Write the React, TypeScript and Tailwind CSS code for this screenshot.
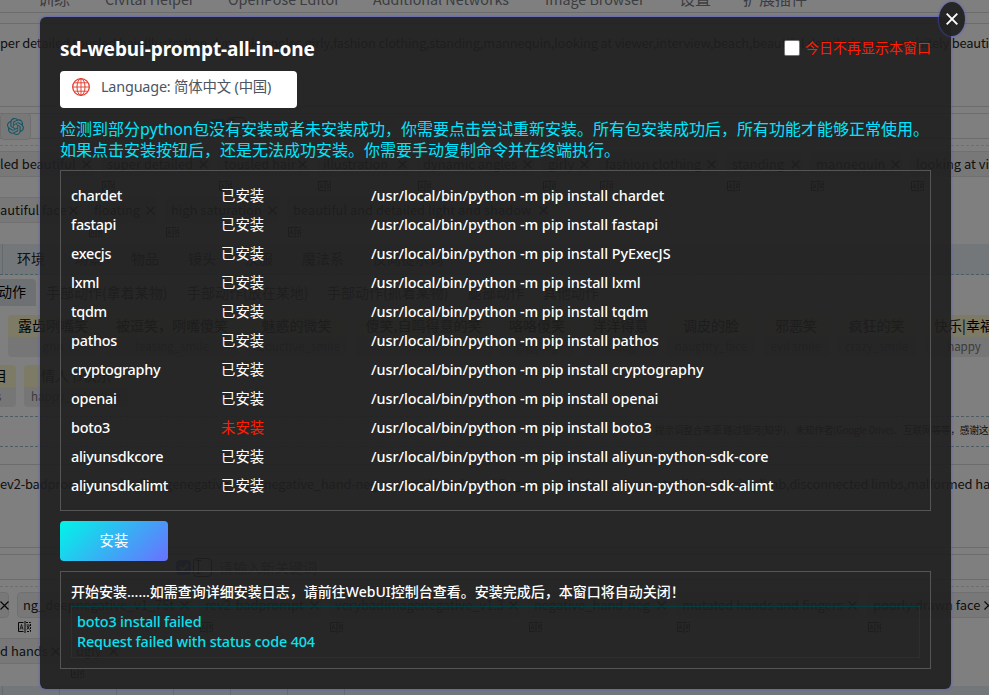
import React from 'react';
import { SiOpenai } from 'react-icons/si';

type Cell = [string, string];

const topTabs: Cell[] = [
  ['训练', 'w-[67px] text-[16px]'],
  ['Civitai Helper', 'w-[123px]'],
  ['OpenPose Editor', 'w-[145px]'],
  ['Additional Networks', 'w-[172px]'],
  ['Image Browser', 'w-[134px]'],
  ['设置', 'w-[64px] text-[16px]'],
  ['扩展插件', 'w-[80px] text-[16px]'],
];

const tagsA: Cell[] = [
  ['led beautiful', 'w-[107px]'],
  ['super detailed', 'w-[117px]'],
  ['tousled hair', 'w-[99px]'],
  ['illustration', 'w-[100px]'],
  ['dynamic angles', 'w-[125px]'],
  ['girly', 'w-[57px]'],
  ['fashion clothing', 'w-[127px]'],
  ['standing', 'w-[84px]'],
  ['mannequin', 'w-[100px]'],
  ['looking at viewer', 'w-[130px]'],
];

const tagsB: Cell[] = [
  ['autiful face', 'w-[94px]'],
  ['floating', 'w-[77px]'],
  ['high saturation', 'w-[122px]'],
  ['beautiful and detailed light and shadow', 'w-[271px]'],
];

const tagsC: Cell[] = [
  ['', 'w-[23px]'],
  ['ng_deepnegative_v1_75t', 'w-[182px]'],
  ['rev2-badprompt', 'w-[130px]'],
  ['verybadimagenegative_v1.3', 'w-[199px]'],
  ['negative_hand-neg', 'w-[148px]'],
  ['mutated hands and fingers', 'w-[191px]'],
  ['poorly drawn face', 'w-[136px]'],
];

const tagsD: Cell[] = [
  ['d hands', 'w-[76px]'],
  ['ugly', 'w-[58px]'],
];

const groups: Cell[] = [
  ['环境', 'w-[57px]'],
  ['场景', 'w-[57px]'],
  ['物品', 'w-[57px]'],
  ['镜头', 'w-[57px]'],
  ['汉服', 'w-[57px]'],
  ['魔法系', 'w-[71px]'],
  ['反向提示词', 'w-[90px]'],
];

const cards: [string, string, string][] = [
  ['露齿咧嘴笑', 'grin', 'w-[90px]'],
  ['被逗笑，咧嘴傻笑', 'teasing_smile', 'w-[131px]'],
  ['魅惑的微笑', 'seductive_smile', 'w-[101px]'],
  ['傻笑,自鸣得意的笑', 'smirk', 'w-[136px]'],
  ['咯咯傻笑', 'giggling', 'w-[74px]'],
  ['洋洋得意', 'smug', 'w-[76px]'],
  ['调皮的脸', 'naughty_face', 'w-[88px]'],
  ['邪恶笑', 'evil smile', 'w-[65px]'],
  ['疯狂的笑', 'crazy_smile', 'w-[79px]'],
  ['快乐|幸福', 'happy', 'w-[79px]'],
];

const packages: [string, boolean, string][] = [
  ['chardet', true, 'chardet'],
  ['fastapi', true, 'fastapi'],
  ['execjs', true, 'PyExecJS'],
  ['lxml', true, 'lxml'],
  ['tqdm', true, 'tqdm'],
  ['pathos', true, 'pathos'],
  ['cryptography', true, 'cryptography'],
  ['openai', true, 'openai'],
  ['boto3', false, 'boto3'],
  ['aliyunsdkcore', true, 'aliyun-python-sdk-core'],
  ['aliyunsdkalimt', true, 'aliyun-python-sdk-alimt'],
];

function Cross() {
  return (
    <svg className="h-[9px] w-[9px] shrink-0" viewBox="0 0 9 9" stroke="#111" strokeWidth="1.2">
      <path d="M.5.5l8 8M8.5.5l-8 8" />
    </svg>
  );
}

function TranslateIcon() {
  return (
    <svg className="h-[12px] w-[13px]" viewBox="0 0 13 12" fill="none" stroke="#111">
      <path d="M5.5 1.5h-5v9h5M7 0v12" />
      <path d="M2 8.5l1.5-5 1.5 5M2.6 7h2" strokeWidth=".8" />
      <path d="M8 1.5h4.5v9H8" strokeDasharray="2 1" />
      <path d="M8.5 4h3M9 8.5l2.5-4M9 5l2.5 3.5" strokeWidth=".9" />
    </svg>
  );
}

function TagRow({ tags }: { tags: Cell[] }) {
  return (
    <div className="h-[46px] shrink-0">
      <div className="flex h-[26px]">
        {tags.map(([label, width], i) => (
          <div key={i} className={`shrink-0 ${width}`}>
            <div className="-ml-1.5 mr-[14px] flex h-[26px] items-center justify-between rounded border border-[#e0e0e0] bg-[#f1f1f1] pl-[5px] pr-[1px] text-[12.9px] text-[#222]">
              <span>{label}</span>
              <Cross />
            </div>
          </div>
        ))}
      </div>
      <div className="-ml-[5px] flex h-[18px] items-center">
        {tags.map(([label, width], i) => (
          <div key={i} className={`shrink-0 ${width}`}>
            {label && i > 0 && <TranslateIcon />}
          </div>
        ))}
      </div>
    </div>
  );
}

function KeywordInput({ left }: { left: string }) {
  return (
    <div className={`flex h-[24px] items-center ${left}`}>
      <span className="flex h-[15px] w-[15px] items-center justify-center rounded-sm bg-[#2277dd]">
        <svg className="h-3 w-3" viewBox="0 0 12 12" fill="none" stroke="white" strokeWidth="2">
          <path d="M2 6l3 3 5-6" />
        </svg>
      </span>
      <span className="ml-[2px] flex h-[19px] w-[19px] items-center rounded-sm border border-black pl-[2px]">
        <svg className="h-[14px] w-[5px]" viewBox="0 0 5 14" fill="none" stroke="black">
          <path d="M0 .5h5M2.5.5v13M0 13.5h5" />
        </svg>
      </span>
      <span className="ml-[7px] text-[14px] text-[#777]">请输入新关键词</span>
    </div>
  );
}

function Background() {
  return (
    <div className="flex h-[695px] w-[989px] flex-col overflow-hidden bg-white font-['Noto_Sans_CJK_SC',sans-serif] whitespace-nowrap text-[#222]">
      <div className="flex h-[13px] shrink-0 items-end border-b border-[#d8d8d8] pb-[2px] pl-[38px] text-[14.3px] leading-[23px] text-[#777b83]">
        {topTabs.map(([t, w]) => (
          <span key={t} className={`shrink-0 ${w}`}>{t}</span>
        ))}
      </div>
      <div className="mt-[10px] flex h-[84px] shrink-0 border-y border-[#d8d8d8] pt-[8px] text-[12.9px] leading-[22px] tracking-[-0.2px]">
        per detailed,tousled hair,illustration,dynamic angles,girly,fashion clothing,standing,mannequin,looking at viewer,interview,beach,beautiful detailed eyes,exquisitely beautiful
      </div>
      <div className="mt-[6px] flex h-[26px] shrink-0 items-center border-y border-[#d8d8d8]">
        <span className="flex h-[27px] w-[31px] shrink-0 items-center justify-center rounded border border-[#dedede] bg-[#f1f1f1]">
          <SiOpenai className="h-[17px] w-[17px] text-[#28a9c9]" />
        </span>
        <KeywordInput left="ml-[179px]" />
      </div>
      <div className="h-[12px] shrink-0 pt-[6px]"><div className="border-t border-dashed border-[#ddd]" /></div>
      <TagRow tags={tagsA} />
      <TagRow tags={tagsB} />
      <div className="mt-px flex h-[31px] shrink-0 items-center border-b border-dashed border-[#92bdc8] bg-[#e6eff5] text-[14px]">
        <span className="mr-[14px] h-full w-[3px] border-r border-[#c6d6dd]" />
        {groups.map(([t, w]) => (
          <span key={t} className={`shrink-0 pb-[2px] ${w}`}>{t}</span>
        ))}
      </div>
      <div className="mt-[4px] flex h-[27px] shrink-0 items-center text-[14px] leading-[25px]">
        <span className="flex h-full w-[36px] items-start rounded-tr bg-[#dde2e7] text-black"><span className="-ml-[2px]">动作</span></span>
        <span className="ml-[10px] w-[141px]">手部动作(拿着某物)</span>
        <span className="w-[140px]">手部动作(放在某地)</span>
        <span className="w-[141px]">手部动作(抓着某物)</span>
        <span className="w-[75px]">腿部动作</span>
        <span>其他动作</span>
      </div>
      <div className="mt-[9px] flex shrink-0 gap-[8.5px] pl-[8px] text-center">
        {cards.map(([t, s, w]) => (
          <div key={t} className={`h-[42px] shrink-0 overflow-hidden rounded bg-[#ececec] ${w}`}>
            <div className="h-[22px] bg-[#faf5cc] text-[14px] leading-[20px] text-black">{t}</div>
            <div className="text-[11.5px] leading-[19px] text-[#777]">{s}</div>
          </div>
        ))}
      </div>
      <div className="mt-[8px] flex h-[42px] shrink-0 gap-[8px] text-center">
        <div className="w-[16px] overflow-hidden rounded-r bg-[#ececec]">
          <div className="h-[22px] bg-[#faf5cc] text-left text-[14px] leading-[20px] text-black"><span className="-ml-[7px]">目</span></div>
          <div className="text-left text-[11.5px] leading-[19px] text-[#777]"><span className="-ml-1">s</span></div>
        </div>
        <div className="w-[104px] overflow-hidden rounded bg-[#ececec]">
          <div className="h-[22px] bg-[#faf5cc] text-[14px] leading-[20px]">情人节快乐</div>
          <div className="text-[11.5px] leading-[19px] text-[#777]">happy_valentine</div>
        </div>
      </div>
      <div className="mt-[9px] h-[31px] shrink-0 border-y border-dashed border-[#9bb8c4] pl-[655px] text-[9.8px] leading-[27px] tracking-[-0.33px] text-[#222]">
        提示词整合来源 路过银河(知乎)、未知作者(Google Drive)、互联网等等，感谢这些作者
      </div>
      <div className="mt-[17px] flex h-[84px] shrink-0 border-y border-[#d8d8d8] pt-[8px] text-[12.9px] leading-[22px] tracking-[-0.14px]">
        ev2-badprompt,verybadimagenegative_v1.3,negative_hand-neg,mutated hands and fingers,poorly drawn face,extra limb,missing limb,disconnected limbs,malformed hands
      </div>
      <div className="mt-[6px] flex h-[26px] shrink-0 items-center border-y border-[#d8d8d8]">
        <KeywordInput left="ml-[176px]" />
      </div>
      <div className="h-[12px] shrink-0 pt-[6px]"><div className="border-t border-dashed border-[#ddd]" /></div>
      <TagRow tags={tagsC} />
      <TagRow tags={tagsD} />
      <div className="mt-[2px] flex h-[9px] shrink-0 bg-[#e6eff5]">
        <span className="w-[3px] shrink-0 border-r border-[#c6d6dd]" />
        {Array.from({ length: 6 }, (_, i) => (
          <span key={i} className="w-[57px] shrink-0 border-r border-[#c6d6dd]" />
        ))}
      </div>
    </div>
  );
}

function Globe() {
  return (
    <svg className="h-[18px] w-[18px] shrink-0" viewBox="0 0 18 18" fill="none" stroke="#e23a2a">
      <circle cx="9" cy="9" r="8.3" strokeWidth="1.3" />
      <ellipse cx="9" cy="9" rx="4" ry="8.3" strokeWidth="1" />
      <path d="M9 1v16M1 9h16M2.4 4.8h13.2M2.4 13.2h13.2" strokeWidth=".9" />
    </svg>
  );
}

function Dialog() {
  return (
    <div className="absolute left-[40px] top-[17px] flex h-[672px] w-[911px] flex-col rounded-[6px] bg-[#1f1f1f]/92 px-[20px] font-['Noto_Sans','Noto_Sans_CJK_SC',sans-serif] whitespace-nowrap text-white shadow-[0_0_3px_#4a54ff]">
      <button className="absolute -right-[14px] -top-[15px] flex h-[34px] w-[26px] items-center justify-center rounded-[50%] bg-[#222222]/95 shadow-[0_0_3px_#4a54ff]">
        <svg className="h-3 w-3" viewBox="0 0 12 12" stroke="white" strokeWidth="1.9">
          <path d="M.7.7l10.6 10.6M11.3.7L.7 11.3" />
        </svg>
      </button>
      <div className="mt-[20px] flex h-[24px] shrink-0 items-center justify-between">
        <h1 className="text-[19px] font-bold leading-[24px] tracking-[-0.07px]">sd-webui-prompt-all-in-one</h1>
        <label className="flex items-center pb-[2px] text-[14px] leading-[20px] text-[#ff1e00]">
          <span className="mr-[5px] h-[16px] w-[16px] rounded-[2px] border border-[#767676] bg-white" />
          今日不再显示本窗口
        </label>
      </div>
      <div className="mt-[10px] flex h-[37px] w-[237px] shrink-0 items-center rounded-[4px] bg-white pb-[5px] pl-[12px] text-[14.4px] text-[#4b5563]">
        <Globe />
        <span className="ml-[11px] tracking-[-0.18px]">Language: 简体中文 (中国)</span>
      </div>
      <p className="mt-[11px] h-[43px] shrink-0 text-[16px] leading-[21px] text-[#00e5ff]">
        检测到部分python包没有安装或者未安装成功，你需要点击尝试重新安装。所有包安装成功后，所有功能才能够正常使用。
        <br />
        如果点击安装按钮后，还是无法成功安装。你需要手动复制命令并在终端执行。
      </p>
      <div className="mt-[8px] h-[341px] shrink-0 border border-[#555] pl-[10px] pt-[10px] text-[14.4px] font-medium leading-[29px]">
        {packages.map(([name, ok, pip]) => (
          <div key={name} className="flex h-[29px]">
            <span className="w-[150px] tracking-[-0.26px]">{name}</span>
            <span className={ok ? 'w-[150px] font-normal' : 'w-[150px] font-normal text-[#ff1e00]'}>{ok ? '已安装' : '未安装'}</span>
            <span className="tracking-[-0.06px]">/usr/local/bin/python -m pip install {pip}</span>
          </div>
        ))}
      </div>
      <button className="mt-[10px] h-[40px] w-[108px] shrink-0 rounded-[4px] bg-[linear-gradient(135deg,#00f5e8,#6a70ff)] text-[14.4px]">安装</button>
      <div className="mt-[10px] h-[98px] shrink-0 border border-[#555] px-[10px] pt-[10px] text-[14.4px] font-medium">
        <div className="h-[24px] text-[14px] leading-[19px]">开始安装......如需查询详细安装日志，请前往WebUI控制台查看。安装完成后，本窗口将自动关闭！</div>
        <div className="h-[52px] border border-[#073e41] pl-[5px] pt-[5px] leading-[20px] tracking-[-0.15px] text-[#0de0ee]">
          <div>boto3 install failed</div>
          <div>Request failed with status code 404</div>
        </div>
      </div>
    </div>
  );
}

export default function App() {
  return (
    <div className="relative h-[695px] w-[989px] overflow-hidden">
      <Background />
      <div className="absolute inset-0 bg-black/50">
        <Dialog />
      </div>
    </div>
  );
}
